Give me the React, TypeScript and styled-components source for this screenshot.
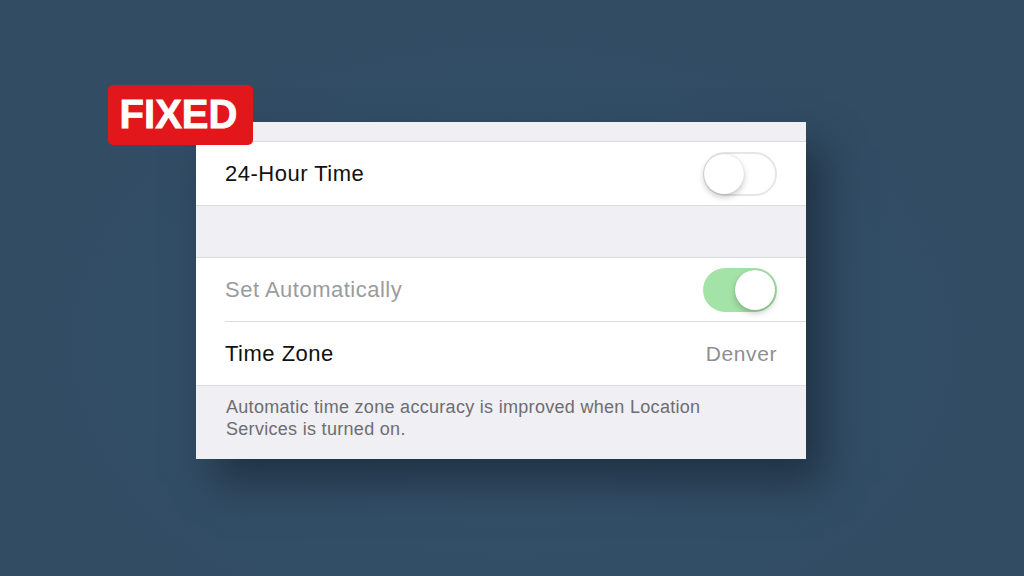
import React from "react";
import styled, { createGlobalStyle } from "styled-components";

const GlobalStyle = createGlobalStyle`
  html, body {
    margin: 0;
    padding: 0;
    background: #324d64;
  }
`;

const Stage = styled.div`
  width: 1024px;
  height: 576px;
  box-sizing: border-box;
  padding: 122px 0 0 196px;
  background: radial-gradient(ellipse at 50% 60%, #345169 0%, #314c63 70%);
  font-family: "Liberation Sans", Arial, sans-serif;
  overflow: hidden;
`;

const Card = styled.div`
  position: relative;
  width: 610px;
  background: #efeff4;
  box-shadow: 18px 24px 38px rgba(18, 30, 44, 0.55);
`;

const Badge = styled.div`
  position: absolute;
  top: -37px;
  left: -88px;
  width: 145px;
  height: 60px;
  box-sizing: border-box;
  border-radius: 5px;
  background: #e1171c;
  color: #fff;
  font-family: "Liberation Sans", Arial, sans-serif;
  font-weight: 700;
  font-size: 40px;
  -webkit-text-stroke: 0.8px #fff;
  display: flex;
  align-items: center;
  justify-content: center;
  padding: 0 4px 2px 0;
`;

const Spacer = styled.div<{ $h: number }>`
  height: ${(p) => p.$h}px;
`;

const Group = styled.div`
  background: #fff;
  border-top: 1px solid #dcdce0;
  border-bottom: 1px solid #dcdce0;
`;

const Row = styled.div<{ $divider?: boolean }>`
  height: 63px;
  margin-left: 29px;
  padding-right: 29px;
  display: flex;
  align-items: center;
  justify-content: space-between;
  border-bottom: ${(p) => (p.$divider ? "1px solid #dcdce0" : "none")};
`;

const Label = styled.span<{ $muted?: boolean }>`
  font-size: 22px;
  letter-spacing: 0.5px;
  color: ${(p) => (p.$muted ? "#9b9b9f" : "#111")};
`;

const Value = styled.span`
  font-size: 21px;
  letter-spacing: 0.6px;
  color: #8e8e93;
`;

const Track = styled.div<{ $on?: boolean }>`
  position: relative;
  width: 74px;
  height: 44px;
  box-sizing: border-box;
  border-radius: 22px;
  background: ${(p) => (p.$on ? "#a3e3a7" : "#fff")};
  border: ${(p) => (p.$on ? "none" : "2px solid #e6e6e9")};
`;

const Knob = styled.div<{ $on?: boolean }>`
  position: absolute;
  top: ${(p) => (p.$on ? "2px" : "0")};
  ${(p) => (p.$on ? "right: 2px;" : "left: -1px;")}
  width: 40px;
  height: 40px;
  border-radius: 50%;
  background: #fff;
  box-shadow: 0 3px 6px rgba(0, 0, 0, 0.22), 0 0 1px rgba(0, 0, 0, 0.2);
`;

const Footer = styled.div`
  padding: 10px 29px 19px 30px;
  font-size: 18px;
  line-height: 22px;
  letter-spacing: 0.3px;
  color: #6d6d72;
`;

const Toggle: React.FC<{ on?: boolean }> = ({ on }) => (
  <Track $on={on}>
    <Knob $on={on} />
  </Track>
);

export default function App() {
  return (
    <>
      <GlobalStyle />
      <Stage>
        <Card>
          <Badge>FIXED</Badge>
          <Spacer $h={19} />
          <Group>
            <Row>
              <Label>24-Hour Time</Label>
              <Toggle />
            </Row>
          </Group>
          <Spacer $h={51} />
          <Group>
            <Row $divider>
              <Label $muted>Set Automatically</Label>
              <Toggle on />
            </Row>
            <Row>
              <Label>Time Zone</Label>
              <Value>Denver</Value>
            </Row>
          </Group>
          <Footer>
            Automatic time zone accuracy is improved when Location
            <br />
            Services is turned on.
          </Footer>
        </Card>
      </Stage>
    </>
  );
}
